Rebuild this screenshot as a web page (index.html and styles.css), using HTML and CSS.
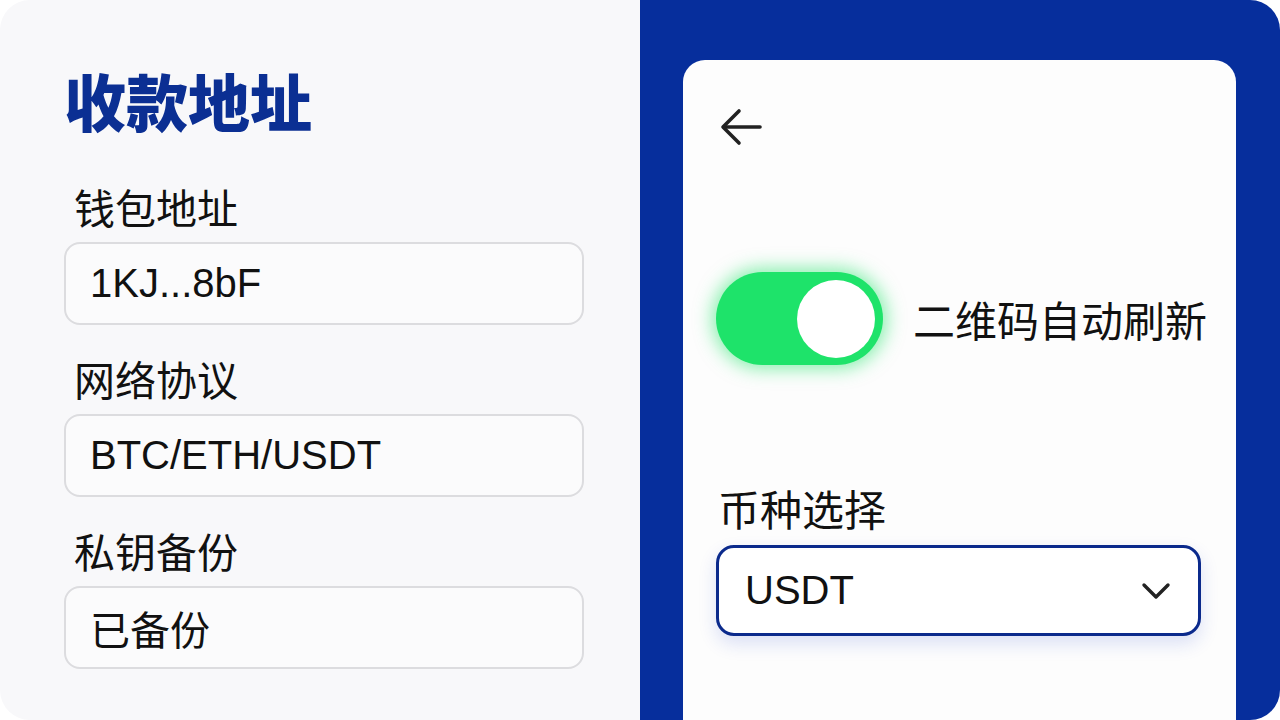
FILE: index.html
```html
<!DOCTYPE html>
<html lang="zh-CN">
<head>
    <meta charset="UTF-8">
    <meta name="viewport" content="width=device-width, initial-scale=1.0">
    <title>收款地址</title>
    <link rel="stylesheet" href="styles.css">
</head>
<body>
    <div class="page">
        <section class="info">
            <h1 class="title">收款地址</h1>
            <div class="field">
                <div class="label">钱包地址</div>
                <div class="box">1KJ...8bF</div>
            </div>
            <div class="field">
                <div class="label">网络协议</div>
                <div class="box">BTC/ETH/USDT</div>
            </div>
            <div class="field">
                <div class="label">私钥备份</div>
                <div class="box">已备份</div>
            </div>
        </section>

        <section class="side">
            <div class="card">
                <div class="back">
                    <svg width="44" height="40" viewBox="0 0 44 40" fill="none" stroke="#222" stroke-width="3.6" stroke-linecap="round" stroke-linejoin="round">
                        <path d="M40 19H4"/>
                        <path d="M19 3L3 19l16 16"/>
                    </svg>
                </div>

                <div class="toggle-row">
                    <div class="toggle">
                        <span class="knob"></span>
                    </div>
                    <span class="toggle-text">二维码自动刷新</span>
                </div>

                <div class="label coin-label">币种选择</div>
                <div class="select">
                    <span>USDT</span>
                    <svg width="30" height="18" viewBox="0 0 30 18" fill="none" stroke="#222" stroke-width="3.4" stroke-linecap="round" stroke-linejoin="round">
                        <path d="M3 3l12 12L27 3"/>
                    </svg>
                </div>
            </div>
        </section>
    </div>
</body>
</html>
```

FILE: styles.css
```css
html, body {
    margin: 0;
    padding: 0;
    background: #fff;
}
body {
    font-family: "Liberation Sans", "Noto Sans CJK SC", sans-serif;
    color: #111;
}
.page {
    display: flex;
    width: 1280px;
    height: 720px;
    overflow: hidden;
}

/* 左侧信息栏 */
.info {
    width: 640px;
    box-sizing: border-box;
    padding: 70px 56px 0 64px;
    background: #f8f8fa;
    border-radius: 30px 0 0 30px;
}
.title {
    margin: 0 0 56px;
    font-size: 62px;
    line-height: 60px;
    font-weight: 900;
    color: #0b2f93;
    font-family: "Noto Sans CJK SC", sans-serif;
}
.field {
    margin-bottom: 33px;
}
.label {
    font-size: 41px;
    line-height: 40px;
    font-weight: 400;
    font-family: "Noto Sans CJK SC", sans-serif;
    padding-left: 10px;
}
.box {
    margin-top: 16px;
    height: 83px;
    box-sizing: border-box;
    display: flex;
    align-items: center;
    padding-left: 24px;
    border: 2px solid #dcdcdf;
    border-radius: 16px;
    background: #fbfbfc;
    font-size: 40px;
}

/* 右侧蓝色面板 */
.side {
    width: 640px;
    box-sizing: border-box;
    padding: 60px 44px 0 43px;
    background: #062e9c;
    border-radius: 0 30px 30px 0;
}
.card {
    height: 700px;
    box-sizing: border-box;
    padding: 48px 30px 0 33px;
    background: #fdfdfd;
    border-radius: 22px;
}
.back {
    height: 40px;
    padding-left: 4px;
}
.toggle-row {
    display: flex;
    align-items: center;
    gap: 30px;
    margin-top: 124px;
}
.toggle {
    flex-shrink: 0;
    width: 167px;
    height: 93px;
    box-sizing: border-box;
    padding: 8px 8px 0 0;
    display: flex;
    justify-content: flex-end;
    border-radius: 47px;
    background: #1ee36a;
    box-shadow: 0 0 18px 4px rgba(40, 230, 110, .55);
}
.knob {
    width: 78px;
    height: 78px;
    border-radius: 50%;
    background: #fff;
}
.toggle-text {
    white-space: nowrap;
    font-size: 42px;
    font-weight: 400;
    font-family: "Noto Sans CJK SC", sans-serif;
}
.coin-label {
    margin-top: 122px;
    padding-left: 2px;
    font-size: 42px;
    line-height: 42px;
}
.select {
    margin-top: 16px;
    width: 485px;
    height: 91px;
    box-sizing: border-box;
    display: flex;
    align-items: center;
    justify-content: space-between;
    padding: 0 27px 0 26px;
    border: 3px solid #0b2a8c;
    border-radius: 18px;
    background: #fff;
    box-shadow: 0 8px 18px rgba(30, 60, 200, .15);
    font-size: 40px;
}
```
